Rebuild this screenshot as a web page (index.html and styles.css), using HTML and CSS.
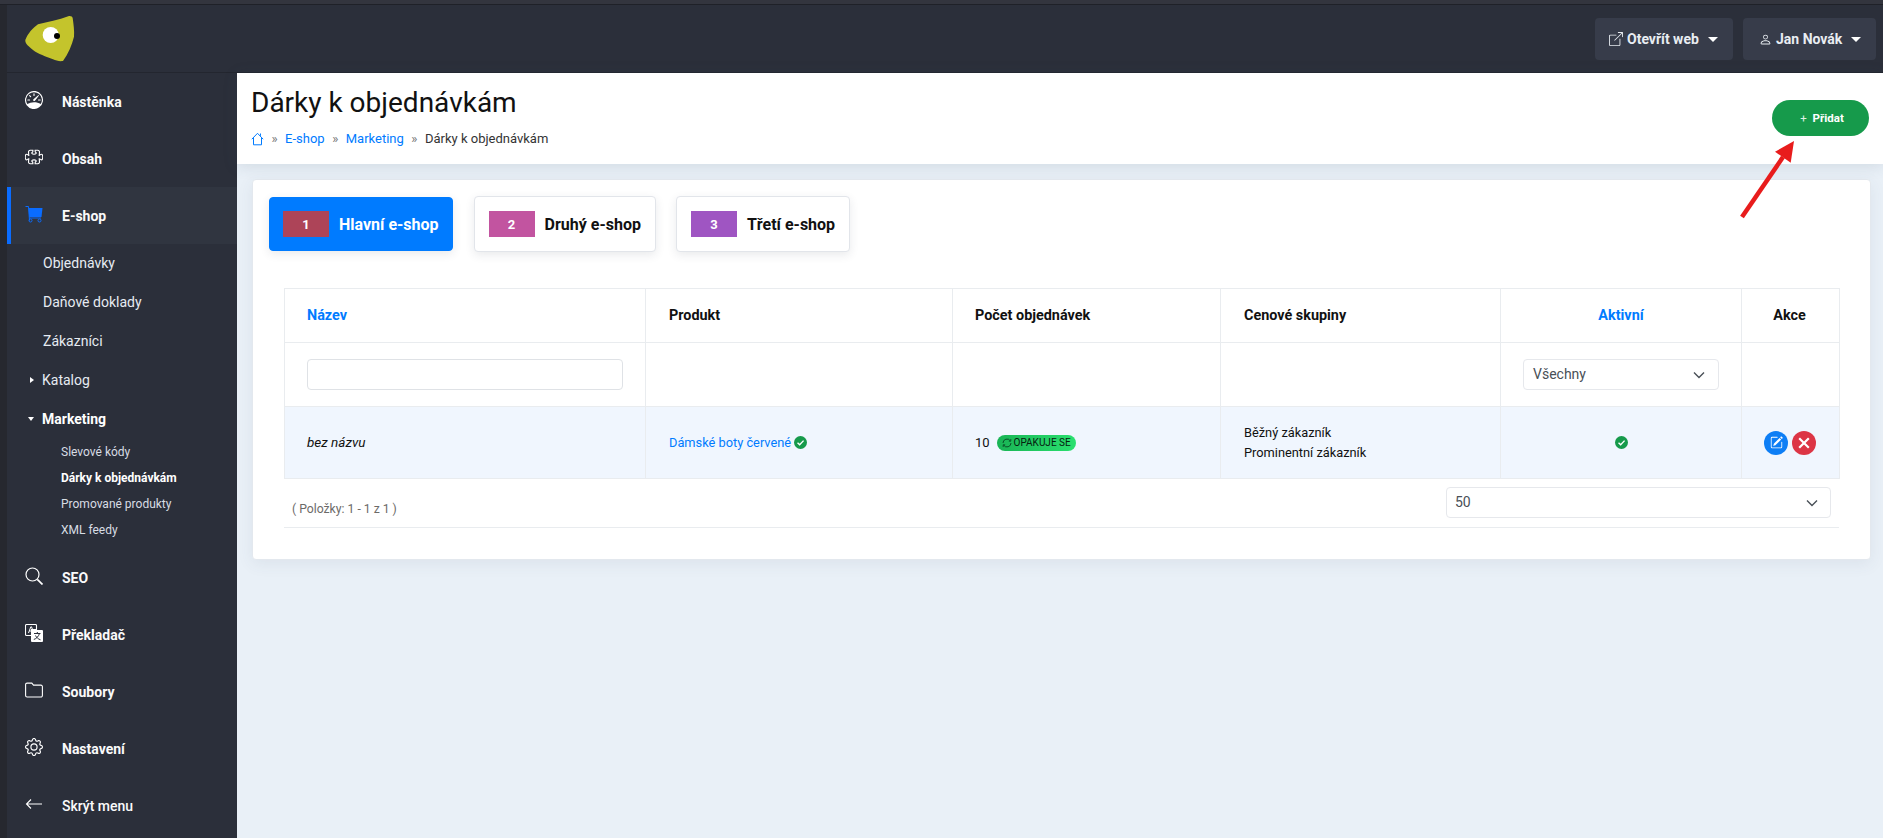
FILE: index.html
```html
<!DOCTYPE html>
<html lang="cs">
<head>
<meta charset="utf-8">
<title>Dárky k objednávkám</title>
<link rel="stylesheet" href="styles.css">
</head>
<body>
<div class="strip"></div>
<div class="shell">
  <div class="edge"></div>
  <div class="app">
    <header class="topbar">
      <a class="logo" href="#">
        <svg width="60" height="50" viewBox="0 0 60 50"><path d="M5.300 27 C8 20 13 15 18 11.300 C28 9 38 7 49 3 C51 2.800 52.500 3.500 52.700 5.300 C53.500 11 54.500 18 54 23.700 C52 32 48 41 43 48 C39 48.500 36 47.500 33 46.300 C26 43.500 18 41 13 37 C9 33.500 5 31 5.300 27 Z" fill="#c4c42c"/><circle cx="30.700" cy="22" r="8" fill="#fff"/><circle cx="37" cy="23" r="3" fill="#000"/></svg>
      </a>
      <div class="top-actions">
        <button class="top-btn top-btn-web">
          <svg class="top-ico" width="14" height="14" viewBox="0 0 16 16" fill="currentColor"><path d="M8.636 3.500a.5.5 0 0 0-.5-.5H1.500A1.500 1.500 0 0 0 0 4.500v10A1.500 1.500 0 0 0 1.500 16h10a1.500 1.500 0 0 0 1.500-1.500V7.864a.5.500 0 0 0-1 0V14.500a.5.500 0 0 1-.5.5h-10a.5.500 0 0 1-.5-.5v-10a.5.500 0 0 1 .5-.5h6.636a.5.500 0 0 0 .5-.5z"/><path d="M16 .5a.5.5 0 0 0-.5-.5h-5a.5.5 0 0 0 0 1h3.793L6.146 9.146a.5.5 0 1 0 .708.708L15 1.707V5.500a.5.500 0 0 0 1 0v-5z"/></svg>
          <span>Otevřít web</span><i class="caret"></i>
        </button>
        <button class="top-btn top-btn-user">
          <svg class="top-ico" width="13" height="13" viewBox="0 0 16 16" fill="currentColor"><path d="M8 8a3 3 0 1 0 0-6 3 3 0 0 0 0 6zm2-3a2 2 0 1 1-4 0 2 2 0 0 1 4 0zm4 8c0 1-1 1-1 1H3s-1 0-1-1 1-4 6-4 6 3 6 4zm-1-.004c-.001-.246-.154-.986-.832-1.664C11.516 10.680 10.289 10 8 10c-2.290 0-3.516.68-4.168 1.332-.678.678-.83 1.418-.832 1.664h10z"/></svg>
          <span>Jan Novák</span><i class="caret"></i>
        </button>
      </div>
    </header>
    <div class="layout">
      <aside class="sidebar">
        <a class="nav-item" href="#">
          <svg class="nav-ico" viewBox="0 0 16 16" fill="currentColor"><path d="M8 2a.5.5 0 0 1 .5.5V4a.5.5 0 0 1-1 0V2.500A.5.5 0 0 1 8 2zM3.732 3.732a.5.5 0 0 1 .707 0l.915.914a.5.5 0 1 1-.708.708l-.914-.915a.5.5 0 0 1 0-.707zM2 8a.5.5 0 0 1 .5-.5h1.586a.5.500 0 0 1 0 1H2.500A.5.5 0 0 1 2 8zm9.500 0a.5.500 0 0 1 .5-.5h1.500a.5.500 0 0 1 0 1H12a.5.500 0 0 1-.5-.5zm.754-4.246a.389.389 0 0 0-.527-.02L7.547 7.310A.91.91 0 1 0 8.850 8.569l3.434-4.297a.389.389 0 0 0-.029-.518z"/><path d="M6.664 15.889A8 8 0 1 1 9.336.11a8 8 0 0 1-2.672 15.780zm-4.665-4.283A11.945 11.945 0 0 1 8 10c2.186 0 4.236.585 6.001 1.606a7 7 0 1 0-12.002 0z"/></svg>
          <span>Nástěnka</span>
        </a>
        <a class="nav-item" href="#">
          <svg class="nav-ico" viewBox="0 0 16 16" fill="none" stroke="currentColor" stroke-width="1"><path d="M3.112 3.645A1.500 1.500 0 0 1 4.605 2H7v.88c0 .5-.4.9-.7 1.150-.5.4-.3 1.470 1.700 1.470s2.200-1.070 1.700-1.470c-.3-.25-.7-.65-.7-1.150V2h2.395a1.500 1.500 0 0 1 1.493 1.645L12.645 6.500h.237c.195 0 .42-.147.675-.48.21-.274.528-.52.943-.52C15.400 5.500 15.800 6.800 15.800 8s-.4 2.500-1.300 2.500c-.415 0-.733-.246-.943-.52-.255-.333-.48-.48-.675-.48h-.237l.243 2.855A1.500 1.500 0 0 1 11.395 14H9v-.88c0-.5.4-.9.7-1.150.5-.4.3-1.470-1.700-1.470s-2.200 1.070-1.700 1.470c.3.250.7.650.7 1.150V14H4.605a1.500 1.500 0 0 1-1.493-1.645L3.356 9.500h-.238c-.195 0-.42.147-.675.48-.21.274-.528.52-.943.52C.6 10.500.2 9.200.2 8s.4-2.500 1.300-2.500c.415 0 .733.246.943.52.255.333.48.480.675.480h.238l-.244-2.855z"/></svg>
          <span>Obsah</span>
        </a>
        <a class="nav-item nav-item-active" href="#">
          <svg class="nav-ico nav-ico-cart" viewBox="0 0 18 17"><path d="M0.500 1H3.500L4.500 15" fill="none" stroke="currentColor" stroke-width="1"/><path d="M3.500 2.500H17.500L16.500 11.500H4.200Z" fill="currentColor"/><path d="M4.500 12.500H16" stroke="currentColor" stroke-width="1"/><circle cx="5.500" cy="15" r="1.500" fill="none" stroke="currentColor"/><circle cx="14.500" cy="15" r="1.500" fill="none" stroke="currentColor"/></svg>
          <span>E-shop</span>
        </a>
        <div class="sub-group">
          <a class="sub-item" href="#">Objednávky</a>
          <a class="sub-item" href="#">Daňové doklady</a>
          <a class="sub-item" href="#">Zákazníci</a>
          <a class="sub-item" href="#"><i class="tri-right"></i>Katalog</a>
          <a class="sub-item sub-item-open" href="#"><i class="tri-down"></i>Marketing</a>
          <div class="sub-list">
            <a class="leaf" href="#">Slevové kódy</a>
            <a class="leaf leaf-active" href="#">Dárky k objednávkám</a>
            <a class="leaf" href="#">Promované produkty</a>
            <a class="leaf" href="#">XML feedy</a>
          </div>
        </div>
        <a class="nav-item" href="#">
          <svg class="nav-ico" viewBox="0 0 18 18" fill="none" stroke="currentColor" stroke-width="1.200"><circle cx="7.500" cy="7.500" r="6.500"/><path d="M12.300 12.300L17.500 17.500" stroke-width="1.700"/></svg>
          <span>SEO</span>
        </a>
        <a class="nav-item" href="#">
          <svg class="nav-ico" viewBox="0 0 18 18"><path d="M1.500 0.500H10.500A1 1 0 0 1 11.500 1.500V5.500H6.500V11.500H1.500A1 1 0 0 1 .5 10.500V1.500A1 1 0 0 1 1.500.5Z" fill="none" stroke="#fff" stroke-width="1.100"/><path d="M3.500 9L5.800 2.800H6.500L8.800 9M4.500 7H7.800" fill="none" stroke="#fff" stroke-width="1"/><path d="M7 6H17A1 1 0 0 1 18 7V17A1 1 0 0 1 17 18H7A1 1 0 0 1 6 17V7A1 1 0 0 1 7 6Z" fill="#fff"/><path d="M9 9.500H15.500M12.300 8V9.500M14.500 9.500C13.500 12.500 11.500 14.500 8.800 15.500M10.500 11.500C11.500 13.500 13 15 15.500 15.800" fill="none" stroke="#2b2f3a" stroke-width="1"/></svg>
          <span>Překladač</span>
        </a>
        <a class="nav-item" href="#">
          <svg class="nav-ico" viewBox="0 0 18 16" fill="none" stroke="currentColor" stroke-width="1.100"><path d="M.6 3V13.500A1.500 1.500 0 0 0 2.100 15H15.900A1.500 1.500 0 0 0 17.400 13.500V4.600A1.500 1.500 0 0 0 15.900 3.100H8.500L6.800 1.100H2.100A1.500 1.500 0 0 0 .6 2.600Z"/></svg>
          <span>Soubory</span>
        </a>
        <a class="nav-item" href="#">
          <svg class="nav-ico" viewBox="0 0 16 16" fill="currentColor"><path d="M8 4.754a3.246 3.246 0 1 0 0 6.492 3.246 3.246 0 0 0 0-6.492zM5.754 8a2.246 2.246 0 1 1 4.492 0 2.246 2.246 0 0 1-4.492 0z"/><path d="M9.796 1.343c-.527-1.790-3.065-1.790-3.592 0l-.094.319a.873.873 0 0 1-1.255.52l-.292-.16c-1.640-.892-3.433.902-2.540 2.541l.159.292a.873.873 0 0 1-.52 1.255l-.319.094c-1.790.527-1.790 3.065 0 3.592l.319.094a.873.873 0 0 1 .52 1.255l-.16.292c-.892 1.640.901 3.434 2.541 2.540l.292-.159a.873.873 0 0 1 1.255.52l.094.319c.527 1.790 3.065 1.790 3.592 0l.094-.319a.873.873 0 0 1 1.255-.52l.292.16c1.640.893 3.434-.902 2.540-2.541l-.159-.292a.873.873 0 0 1 .52-1.255l.319-.094c1.790-.527 1.790-3.065 0-3.592l-.319-.094a.873.873 0 0 1-.52-1.255l.16-.292c.893-1.640-.902-3.433-2.541-2.540l-.292.159a.873.873 0 0 1-1.255-.52l-.094-.319zm-2.633.283c.246-.835 1.428-.835 1.674 0l.094.319a1.873 1.873 0 0 0 2.693 1.115l.291-.16c.764-.415 1.600.42 1.184 1.185l-.159.292a1.873 1.873 0 0 0 1.116 2.692l.318.094c.835.246.835 1.428 0 1.674l-.319.094a1.873 1.873 0 0 0-1.115 2.693l.16.291c.415.764-.42 1.600-1.185 1.184l-.291-.159a1.873 1.873 0 0 0-2.693 1.116l-.094.318c-.246.835-1.428.835-1.674 0l-.094-.319a1.873 1.873 0 0 0-2.692-1.115l-.292.16c-.764.415-1.600-.42-1.184-1.185l.159-.291A1.873 1.873 0 0 0 1.945 8.930l-.319-.094c-.835-.246-.835-1.428 0-1.674l.319-.094A1.873 1.873 0 0 0 3.060 4.377l-.16-.292c-.415-.764.42-1.600 1.185-1.184l.292.159a1.873 1.873 0 0 0 2.692-1.115l.094-.319z"/></svg>
          <span>Nastavení</span>
        </a>
        <a class="nav-item nav-item-plain" href="#">
          <svg class="nav-ico" viewBox="0 0 18 12" fill="none" stroke="currentColor" stroke-width="1.100"><path d="M1.500 6H17M6 1.500L1.500 6L6 10.500"/></svg>
          <span>Skrýt menu</span>
        </a>
      </aside>
      <main class="main">
        <section class="page-head">
          <div>
            <h1 class="page-title">Dárky k objednávkám</h1>
            <nav class="crumbs">
              <a href="#" class="crumb-home"><svg width="13" height="14" viewBox="0 0 13 14" fill="none" stroke="currentColor" stroke-width="1"><path d="M.8 7.200L6.500 1.300L12.200 7.200M2.500 5.800V12.800H10.500V5.800M9.500 1.500V3.800"/></svg></a>
              <span class="sep">»</span>
              <a href="#">E-shop</a>
              <span class="sep">»</span>
              <a href="#">Marketing</a>
              <span class="sep">»</span>
              <span class="crumb-now">Dárky k objednávkám</span>
            </nav>
          </div>
          <button class="add-btn"><span class="add-plus">+</span> Přidat</button>
        </section>
        <section class="content">
          <div class="card">
            <div class="tabs">
              <a class="tab tab-active" href="#"><span class="swatch swatch-1">1</span>Hlavní e-shop</a>
              <a class="tab" href="#"><span class="swatch swatch-2">2</span>Druhý e-shop</a>
              <a class="tab" href="#"><span class="swatch swatch-3">3</span>Třetí e-shop</a>
            </div>
            <table class="grid">
              <colgroup>
                <col class="c1"><col class="c2"><col class="c3"><col class="c4"><col class="c5"><col class="c6">
              </colgroup>
              <thead>
                <tr class="row-head">
                  <th class="sortable">Název</th>
                  <th class="nudge">Produkt</th>
                  <th>Počet objednávek</th>
                  <th class="nudge">Cenové skupiny</th>
                  <th class="sortable center">Aktivní</th>
                  <th class="center th-actions">Akce</th>
                </tr>
                <tr class="row-filter">
                  <td><input class="field" type="text" aria-label="Název"></td>
                  <td></td>
                  <td></td>
                  <td></td>
                  <td>
                    <div class="select"><span class="select-val">Všechny</span><svg width="12" height="8" viewBox="0 0 12 8" fill="none" stroke="#495057" stroke-width="1.400"><path d="M1 1.500L6 6.500L11 1.500"/></svg></div>
                  </td>
                  <td></td>
                </tr>
              </thead>
              <tbody>
                <tr class="row-data">
                  <td><em>bez názvu</em></td>
                  <td class="nudge"><a href="#" class="link">Dámské boty červené</a> <svg class="ok" width="13" height="13" viewBox="0 0 14 14"><circle cx="7" cy="7" r="7" fill="#169a4b"/><path d="M3.800 7.200L6.100 9.400L10.300 5" fill="none" stroke="#fff" stroke-width="1.500"/></svg></td>
                  <td>
                    <div class="count">10 <span class="badge"><svg width="10" height="10" viewBox="0 0 10 10" fill="none" stroke="#04351a" stroke-width=".8"><path d="M1 5A4 4 0 0 1 8.300 2.800M9 5A4 4 0 0 1 1.700 7.200"/><path d="M8.800 1V3.200H6.800M1.200 9V6.800H3.200" stroke-width=".7"/></svg>OPAKUJE SE</span></div>
                  </td>
                  <td class="nudge">Běžný zákazník<br>Prominentní zákazník</td>
                  <td class="center"><svg class="ok" width="13" height="13" viewBox="0 0 14 14"><circle cx="7" cy="7" r="7" fill="#169a4b"/><path d="M3.800 7.200L6.100 9.400L10.300 5" fill="none" stroke="#fff" stroke-width="1.500"/></svg></td>
                  <td>
                    <div class="actions">
                      <a class="round round-blue" href="#"><svg width="13" height="13" viewBox="0 0 16 16" fill="#fff"><path d="M15.502 1.940a.5.5 0 0 1 0 .706L14.459 3.690l-2-2L13.502.646a.5.500 0 0 1 .707 0l1.293 1.293zm-1.750 2.456-2-2L4.939 9.210a.5.5 0 0 0-.121.196l-.805 2.414a.25.25 0 0 0 .316.316l2.414-.805a.5.5 0 0 0 .196-.12l6.813-6.814z"/><path d="M1 13.500A1.500 1.500 0 0 0 2.500 15h11a1.500 1.500 0 0 0 1.500-1.500v-6a.5.5 0 0 0-1 0v6a.5.5 0 0 1-.5.5h-11a.5.5 0 0 1-.5-.5v-11a.5.5 0 0 1 .5-.5H9a.5.5 0 0 0 0-1H2.500A1.500 1.500 0 0 0 1 2.500v11z"/></svg></a>
                      <a class="round round-red" href="#"><svg width="12" height="12" viewBox="0 0 12 12" fill="none" stroke="#fff" stroke-width="2.200"><path d="M1.200 1.200L10.800 10.800M10.800 1.200L1.200 10.800"/></svg></a>
                    </div>
                  </td>
                </tr>
              </tbody>
            </table>
            <div class="grid-foot">
              <span class="foot-info">( Položky: 1 - 1 z 1 )</span>
              <div class="select select-size"><span class="select-val">50</span><svg width="12" height="8" viewBox="0 0 12 8" fill="none" stroke="#495057" stroke-width="1.400"><path d="M1 1.500L6 6.500L11 1.500"/></svg></div>
            </div>
          </div>
        </section>
      </main>
    </div>
  </div>
</div>
<svg class="arrow" width="62" height="90" viewBox="0 0 62 90"><path d="M6 85L47 25" stroke="#e81c1c" stroke-width="4.500" fill="none"/><path d="M58 9L54.700 30.700L39 19.700Z" fill="#e81c1c"/></svg>
</body>
</html>
```

FILE: styles.css
```css
* { box-sizing: border-box; }
html, body { margin: 0; height: 100%; }
body {
  width: 1883px;
  height: 838px;
  overflow: hidden;
  background: #2b2f3a;
  font-family: Roboto, "Liberation Sans", sans-serif;
  font-size: 12.800px;
  color: #111;
  position: relative;
}
a { text-decoration: none; color: inherit; }
button { font-family: inherit; border: 0; cursor: pointer; }

.strip { height: 5px; background: #33353e; border-bottom: 1px solid #1f2128; }
.shell { display: flex; height: 833px; }
.edge { width: 7px; background: #26282f; }
.app { flex: 1; min-width: 0; display: flex; flex-direction: column; }

.topbar {
  height: 68px;
  flex: none;
  display: flex;
  justify-content: space-between;
  align-items: flex-start;
  background: #2b2f3a;
  border-bottom: 1px solid #23262f;
}
.logo { display: block; margin: 8px 0 0 13px; height: 50px; }
.top-actions { display: flex; gap: 10px; padding: 13px 7px 0 0; }
.top-btn {
  height: 42px;
  display: flex;
  align-items: center;
  background: #373c4a;
  color: #e9edf2;
  border-radius: 4px;
  font-size: 14px;
  font-weight: 700;
}
.top-btn-web { width: 138px; padding-left: 14px; gap: 4px; }
.top-btn-user { width: 133px; padding-left: 16px; gap: 4px; }
.caret {
  width: 0;
  height: 0;
  margin-left: 5px;
  border-left: 5px solid transparent;
  border-right: 5px solid transparent;
  border-top: 5px solid #fff;
}

.layout { flex: 1; display: flex; min-height: 0; }
.sidebar { width: 230px; flex: none; background: #2b2f3a; color: #fff; }
.nav-item {
  height: 57px;
  display: flex;
  align-items: center;
  padding-left: 18px;
  font-size: 14px;
  font-weight: 700;
  color: #fafafa;
}
.nav-item-plain { font-weight: 500; }
.nav-item-active { background: #303540; border-left: 4px solid #0a6cff; padding-left: 14px; }
.nav-ico { width: 18px; height: 18px; margin-right: 19px; color: #fff; flex: none; position: relative; top: -2px; }
.nav-ico-cart { color: #0a6cff; }
.sub-group { margin-top: -1px; padding-bottom: 6px; }
.sub-item {
  height: 39px;
  display: flex;
  align-items: center;
  padding-left: 36px;
  font-size: 14px;
  color: #e6ebf2;
}
.sub-item-open { font-weight: 700; color: #fff; }
.tri-right, .tri-down { width: 0; height: 0; flex: none; }
.tri-right { margin-left: -13px; margin-right: 8px; border-top: 3.500px solid transparent; border-bottom: 3.500px solid transparent; border-left: 4px solid #fff; }
.tri-down { margin-left: -15px; margin-right: 8px; border-left: 3.500px solid transparent; border-right: 3.500px solid transparent; border-top: 4px solid #fff; }
.sub-list { padding-top: 1px; }
.leaf {
  height: 26px;
  display: flex;
  align-items: center;
  padding-left: 54px;
  font-size: 12px;
  color: #d8dde4;
}
.leaf-active { font-weight: 700; color: #fff; }

.main { flex: 1; min-width: 0; background: #e9f0f7; }
.page-head {
  height: 91px;
  background: #fff;
  display: flex;
  justify-content: space-between;
  padding: 13px 14px 0 14px;
  box-shadow: 0 2px 14px rgba(60, 80, 100, .14);
  position: relative;
}
.page-title { margin: 0; font-size: 28px; font-weight: 400; line-height: 33px; color: #111; }
.crumbs { display: flex; align-items: center; gap: 7.500px; margin-top: 12px; font-size: 13px; color: #007bff; line-height: 16px; }
.crumb-home { display: flex; }
.sep { color: #777; }
.crumb-now { color: #333; }
.add-btn {
  width: 97px;
  height: 36px;
  margin-top: 14px;
  padding: 0 0 0 3px;
  background: #169a4b;
  border-radius: 18px;
  color: #fff;
  font-size: 11.500px;
  font-weight: 700;
}
.add-plus { font-weight: 400; margin-right: 3px; color: #dff3e6; }

.content { padding: 15px 12px 0 15px; }
.card {
  height: 381px;
  background: #fff;
  border: 1px solid #e3e8ee;
  border-radius: 4px;
  padding: 17px 31px 0 31px;
  box-shadow: 0 4px 16px rgba(60, 80, 100, .08);
}
.tabs { display: flex; gap: 21px; margin-left: -15px; height: 54px; }
.tab {
  display: flex;
  align-items: center;
  gap: 10px;
  margin: -1px 0 -1px -1px;
  padding: 0 14px;
  background: #fff;
  border: 1px solid #e2e5ea;
  border-radius: 4px;
  font-size: 16px;
  font-weight: 700;
  color: #111;
  box-shadow: 0 3px 10px rgba(40, 50, 70, .1);
}
.tab-active {
  margin: 0 1px 0 0;
  padding: 0 13px;
  background: #007bff;
  border-color: #007bff;
  color: #fff;
}
.swatch {
  width: 46px;
  height: 26px;
  display: flex;
  align-items: center;
  justify-content: center;
  color: #fff;
  font-size: 13px;
  font-weight: 700;
}
.swatch-1 { background: #ad4458; }
.swatch-2 { background: #c254a0; }
.swatch-3 { background: #9f55c2; }

.grid {
  width: 1555px;
  margin-top: 37px;
  border-collapse: collapse;
  table-layout: fixed;
}
.c1 { width: 361px; }
.c2 { width: 307px; }
.c3 { width: 268px; }
.c4 { width: 280px; }
.c5 { width: 241px; }
.c6 { width: 98px; }
.grid th, .grid td { border: 1px solid #e9ecef; padding: 0 22px; text-align: left; vertical-align: middle; }
.grid th { font-size: 14.400px; font-weight: 700; color: #111; padding-bottom: 1px; }
.grid th.sortable { color: #007bff; }
.grid th.center, .grid td.center { text-align: center; }
.grid th.nudge, .grid td.nudge { padding-left: 23px; }
.grid th.th-actions { padding: 0 2px 1px 0; }
.row-head { height: 54px; }
.row-filter { height: 64px; }
.row-data { height: 72px; background: #f0f6fe; line-height: 20px; }
.grid td em { font-style: italic; font-size: 13.500px; }
.link { color: #007bff; }
.ok { vertical-align: -2px; }
.field {
  display: block;
  width: 100%;
  height: 31px;
  border: 1px solid #dfe2e6;
  border-radius: 4px;
  background: #fff;
}
.select {
  height: 31px;
  display: flex;
  align-items: center;
  justify-content: space-between;
  padding: 0 13px 0 9px;
  border: 1px solid #e6e8ec;
  border-radius: 4px;
  background: #fff;
  font-size: 14px;
  color: #495057;
}
.select-val { padding-bottom: 1px; }
.count { display: flex; align-items: center; gap: 7px; font-size: 13px; }
.badge {
  width: 79px;
  height: 16px;
  display: flex;
  align-items: center;
  justify-content: center;
  gap: 2px;
  border-radius: 8px;
  background: linear-gradient(90deg, #19b455, #2ae06f);
  font-size: 10px;
  color: #06200f;
}
.actions { display: flex; justify-content: center; gap: 4px; margin-left: -1px; }
.grid td:last-child { padding: 0; }
.round { width: 24px; height: 24px; border-radius: 50%; display: flex; align-items: center; justify-content: center; }
.round-blue { background: #0d7ef5; }
.round-red { background: #dc3545; }

.grid-foot {
  width: 1555px;
  height: 49px;
  display: flex;
  justify-content: space-between;
  align-items: flex-start;
  padding: 8px 8px 0 8px;
  border-bottom: 1px solid #e9ecef;
}
.foot-info { font-size: 12.200px; color: #6c6a68; margin-top: 15px; }
.select-size { width: 385px; padding: 0 12px 0 8px; }

.arrow { position: absolute; left: 1736px; top: 132px; }
```
